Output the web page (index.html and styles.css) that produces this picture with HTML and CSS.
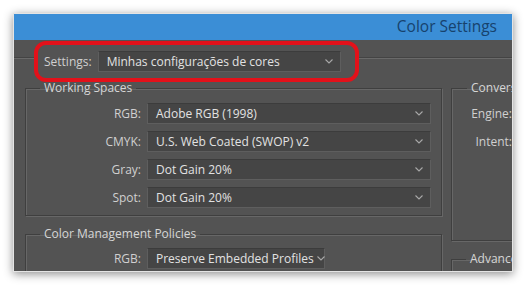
FILE: index.html
```html
<!DOCTYPE html>
<html lang="en">
<head>
  <meta charset="UTF-8">
  <title>Color Settings</title>
  <link rel="stylesheet" href="styles.css">
</head>
<body>
  <div class="window">
    <div class="titlebar">Color Settings</div>

    <div class="content">
      <!-- Settings preset row, circled in red -->
      <div class="settings-bar">
        <div class="highlight">
          <span class="label">Settings:</span>
          <div class="select settings-select">
            <span>Minhas configurações de cores</span>
            <svg class="chevron" width="8" height="5" viewBox="0 0 8 5"><polyline points="0.5,0.5 4,4 7.5,0.5"/></svg>
          </div>
        </div>
      </div>

      <div class="columns">
        <div class="col-left">
          <fieldset class="group working">
            <legend>Working Spaces</legend>
            <div class="rows">
              <span class="label">RGB:</span>
              <div class="select"><span>Adobe RGB (1998)</span><svg class="chevron" width="8" height="5" viewBox="0 0 8 5"><polyline points="0.5,0.5 4,4 7.5,0.5"/></svg></div>
              <span class="label">CMYK:</span>
              <div class="select"><span>U.S. Web Coated (SWOP) v2</span><svg class="chevron" width="8" height="5" viewBox="0 0 8 5"><polyline points="0.5,0.5 4,4 7.5,0.5"/></svg></div>
              <span class="label">Gray:</span>
              <div class="select"><span>Dot Gain 20%</span><svg class="chevron" width="8" height="5" viewBox="0 0 8 5"><polyline points="0.5,0.5 4,4 7.5,0.5"/></svg></div>
              <span class="label">Spot:</span>
              <div class="select"><span>Dot Gain 20%</span><svg class="chevron" width="8" height="5" viewBox="0 0 8 5"><polyline points="0.5,0.5 4,4 7.5,0.5"/></svg></div>
            </div>
          </fieldset>

          <fieldset class="group policies">
            <legend>Color Management Policies</legend>
            <div class="rows">
              <span class="label">RGB:</span>
              <div class="select short"><span>Preserve Embedded Profiles</span><svg class="chevron" width="8" height="5" viewBox="0 0 8 5"><polyline points="0.5,0.5 4,4 7.5,0.5"/></svg></div>
            </div>
          </fieldset>
        </div>

        <div class="col-right">
          <fieldset class="group conversion">
            <legend>Conversion Options</legend>
            <div class="rows">
              <span class="label">Engine:</span>
              <span></span>
              <span class="label">Intent:</span>
              <span></span>
            </div>
          </fieldset>
          <fieldset class="group advanced">
            <legend>Advanced Controls</legend>
          </fieldset>
        </div>
      </div>
    </div>
  </div>
</body>
</html>
```

FILE: styles.css
```css
body {
  margin: 0;
  padding: 13px;
  background: #ffffff;
  font-family: 'Open Sans', 'Noto Sans', sans-serif;
  font-size: 12px;
}
.window {
  width: 500px;
  height: 259px;
  box-sizing: border-box;
  border: 1px solid #e4e4e4;
  background: #535353;
  overflow: hidden;
  box-shadow: 0 2px 9px rgba(0, 0, 0, 0.45);
}
.titlebar {
  height: 26px;
  line-height: 24px;
  background: #3b8ed6;
  color: #17426d;
  font-size: 15.5px;
  text-align: right;
  padding-right: 15px;
}
.content {
  color: #d2d2d2;
  white-space: nowrap;
}

/* settings row */
.settings-bar {
  display: flex;
  align-items: flex-start;
  padding-top: 1px;
  height: 40px;
}
.settings-bar::before,
.settings-bar::after {
  content: '';
  height: 1px;
  margin-top: 17px;
  background: #6a6a6a;
  box-shadow: 0 -1px 0 #444;
}
.settings-bar::before {
  width: 20px;
}
.settings-bar::after {
  flex: 1;
}
.highlight {
  display: flex;
  align-items: center;
  gap: 6px;
  border: 4px solid #e3111a;
  border-radius: 12px;
  padding: 0 14px 0 6px;
  height: 33px;
}
.settings-select {
  width: 243px;
}

/* selects */
.select {
  display: flex;
  align-items: center;
  gap: 3px;
  height: 21px;
  box-sizing: border-box;
  padding: 0 7px 0 8px;
  background: #454545;
  border: 1px solid #5e5e5e;
  border-top-color: #3c3c3c;
  color: #e2e2e2;
}
.chevron {
  flex-shrink: 0;
  margin-left: auto;
  fill: none;
  stroke: #a8a8a8;
  stroke-width: 1.1;
}
.label {
  color: #d0d0d0;
}

/* group boxes */
.columns {
  display: flex;
  gap: 9px;
  padding-left: 11px;
}
.col-left {
  display: flex;
  flex-direction: column;
  gap: 11px;
}
.group {
  margin: 0;
  padding: 0;
  border: 1px solid #3f3f3f;
  box-shadow: 1px 1px 0 #676767, inset 1px 1px 0 #676767;
}
.group legend {
  margin-left: 14px;
  padding: 0 4px;
  line-height: 14px;
  color: #d6d6d6;
}
.rows {
  display: grid;
  grid-template-columns: 115px 1fr;
  column-gap: 6px;
  row-gap: 7px;
  align-items: center;
}
.rows .label {
  text-align: right;
}
.working {
  width: 417px;
  box-sizing: border-box;
}
.working .rows {
  padding: 8px 10px 7px 0;
}
.policies {
  width: 417px;
  box-sizing: border-box;
  height: 60px;
}
.policies .rows {
  padding: 7px 0 0 0;
}
.short {
  width: 178px;
  padding-right: 3px;
}
.col-right {
  display: flex;
  flex-direction: column;
  gap: 11px;
  width: 120px;
  flex-shrink: 0;
}
.conversion {
  height: 158px;
}
.conversion legend {
  margin-left: 15px;
}
.conversion .rows {
  grid-template-columns: 60px 1fr;
  padding-top: 8px;
  row-gap: 7px;
}
.conversion .rows > * {
  height: 21px;
  line-height: 21px;
}
.advanced {
  height: 40px;
}
```
